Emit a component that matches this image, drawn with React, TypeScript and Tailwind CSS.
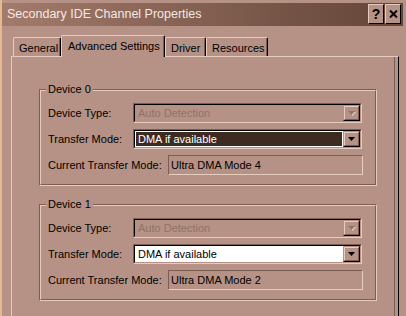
import React from 'react';

function Arrow({ disabled }: { disabled?: boolean }) {
  return (
    <svg width="9" height="6" viewBox="0 0 9 6">
      {disabled && <polygon points="2,2 9,2 5.5,6" fill="#e5cbc0" />}
      <polygon points="1,1 8,1 4.5,5" fill={disabled ? '#8f7268' : '#000000'} />
    </svg>
  );
}

function DropButton({ disabled }: { disabled?: boolean }) {
  return (
    <div className="w-[17px] h-full border border-t-[#b59285] border-l-[#b59285] border-r-black border-b-black">
      <div className="w-full h-full border border-t-[#e5cbc0] border-l-[#e5cbc0] border-r-[#7b5d51] border-b-[#7b5d51] flex items-center justify-center bg-[#b59285]">
        <Arrow disabled={disabled} />
      </div>
    </div>
  );
}

function Combo({ text, variant }: { text: string; variant: 'disabled' | 'selected' | 'normal' }) {
  const field =
    variant === 'disabled' ? (
      <div className="flex-1 flex items-center pl-[3px] text-[#8f7268] bg-[#b59285]">{text}</div>
    ) : variant === 'selected' ? (
      <div className="flex-1 flex items-center bg-white p-[1px]">
        <div className="w-full h-full flex items-center pl-[2px] bg-[#3d2a20] text-white">{text}</div>
      </div>
    ) : (
      <div className="flex-1 flex items-center pl-[3px] bg-white text-black">{text}</div>
    );
  return (
    <div className="w-[229px] h-[20px] border border-t-[#7b5d51] border-l-[#7b5d51] border-b-[#e5cbc0] border-r-[#e5cbc0]">
      <div className="w-full h-full border border-t-black border-l-black border-b-[#b59285] border-r-[#b59285] flex">
        {field}
        <DropButton disabled={variant === 'disabled'} />
      </div>
    </div>
  );
}

function ReadBox({ text }: { text: string }) {
  return (
    <div className="w-[195px] h-[20px] border border-t-[#7b5d51] border-l-[#7b5d51] border-b-[#e5cbc0] border-r-[#e5cbc0] flex items-center pl-[2px]">
      {text}
    </div>
  );
}

function Group({ title, mode, current, selected }: { title: string; mode: string; current: string; selected: boolean }) {
  return (
    <div className="relative w-[338px] border border-t-[#7b5d51] border-l-[#7b5d51] border-b-[#e5cbc0] border-r-[#e5cbc0]">
      <div className="border border-t-[#e5cbc0] border-l-[#e5cbc0] border-b-[#7b5d51] border-r-[#7b5d51] pl-[7px] pt-[12px] pb-[9px] flex flex-col gap-[6px]">
        <div className="flex items-center h-[20px]">
          <div className="w-[85px]">Device Type:</div>
          <Combo text="Auto Detection" variant="disabled" />
        </div>
        <div className="flex items-center h-[20px]">
          <div className="w-[85px]">Transfer Mode:</div>
          <Combo text={mode} variant={selected ? 'selected' : 'normal'} />
        </div>
        <div className="flex items-center h-[20px]">
          <div className="w-[120px]">Current Transfer Mode:</div>
          <ReadBox text={current} />
        </div>
      </div>
      <div className="absolute top-[-8px] left-[6px] px-[2px] bg-[#b59285] leading-[14px]">{title}</div>
    </div>
  );
}

function Tab({ label, width, selected }: { label: string; width: number; selected?: boolean }) {
  return (
    <div
      className={
        selected
          ? 'relative z-10 h-[22px] mb-[-1px] bg-[#b59285] border-t border-l border-r border-t-[#e5cbc0] border-l-[#e5cbc0] border-r-black rounded-t-[2px] shadow-[inset_-1px_0_0_#7b5d51] pl-[6px] pt-[2px]'
          : 'h-[19px] bg-[#b59285] border-t border-l border-r border-t-[#e5cbc0] border-l-[#e5cbc0] border-r-black rounded-t-[2px] shadow-[inset_-1px_0_0_#7b5d51] pl-[5px] pt-[2px]'
      }
      style={{ width }}
    >
      {label}
    </div>
  );
}

export default function App() {
  return (
    <div className="w-[406px] h-[316px] overflow-hidden bg-[#b59285] font-['Liberation_Sans',Arial,sans-serif] text-[11px] text-black border-l-2 border-l-[#e8b98f]">
      <div className="mt-[3px] mr-[3px] h-[23px] flex items-start pt-[1px] bg-gradient-to-r from-[#a37b6c] to-[#634538]">
        <div className="flex-1 pl-[5px] pt-[2px] text-[12.5px] text-[#f4e8e2] leading-[16px]">Secondary IDE Channel Properties</div>
        <div className="flex gap-[1px] pr-[2px]">
          <div className="w-[16px] h-[20px] border border-t-[#e5cbc0] border-l-[#e5cbc0] border-r-black border-b-black bg-[#b59285] flex items-center justify-center text-[14px] font-bold leading-none">
            ?
          </div>
          <div className="w-[16px] h-[20px] border border-t-[#e5cbc0] border-l-[#e5cbc0] border-r-black border-b-black bg-[#b59285] flex items-center justify-center">
            <svg width="9" height="8" viewBox="0 0 9 8">
              <path d="M1 0.5 L8 7.5 M8 0.5 L1 7.5" stroke="#000" strokeWidth="2" />
            </svg>
          </div>
        </div>
      </div>
      <div className="mt-[9px] pl-[11px] flex items-end h-[21px]">
        <Tab label="General" width={48} />
        <Tab label="Advanced Settings" width={104} selected />
        <Tab label="Driver" width={41} />
        <Tab label="Resources" width={62} />
      </div>
      <div className="ml-[9px] w-[388px] h-[300px] border-t border-l border-r border-t-[#e5cbc0] border-l-[#e5cbc0] border-r-black shadow-[inset_-3px_0_0_#b59285,inset_-4px_0_0_#7b5d51] pl-[27px] pt-[32px] flex flex-col gap-[18px]">
        <Group title="Device 0" mode="DMA if available" current="Ultra DMA Mode 4" selected />
        <Group title="Device 1" mode="DMA if available" current="Ultra DMA Mode 2" selected={false} />
      </div>
    </div>
  );
}
